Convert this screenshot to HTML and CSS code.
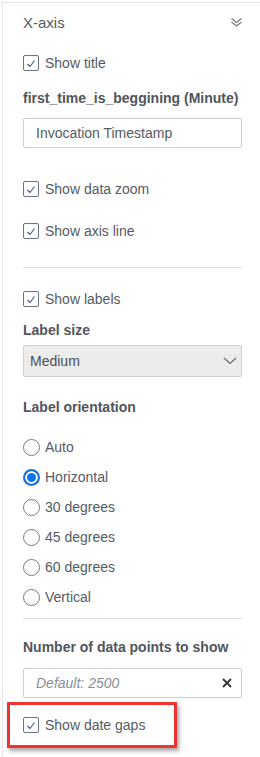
FILE: index.html
```html
<!DOCTYPE html>
<html>
<head>
<meta charset="utf-8">
<link rel="stylesheet" href="styles.css">
</head>
<body>
<div class="panel">
  <div class="header">
    <span class="title">X-axis</span>
    <svg class="dchev" width="13" height="11" viewBox="0 0 13 11"><path d="M1.5 1.5 L6.5 5.5 L11.5 1.5 M1.5 5 L6.5 9 L11.5 5" fill="none" stroke="#7a7a7a" stroke-width="1.3"/></svg>
  </div>

  <div class="row check r-title"><span class="cb"><svg width="10" height="9" viewBox="0 0 10 9"><path d="M1.5 5 L4 7.5 L8.5 1.5" fill="none" stroke="#3b4f8c" stroke-width="1.1"/></svg></span><span>Show title</span></div>
  <div class="label l-first">first_time_is_beggining (Minute)</div>
  <div class="input i-first"><span>Invocation Timestamp</span></div>

  <div class="row check r-zoom"><span class="cb"><svg width="10" height="9" viewBox="0 0 10 9"><path d="M1.5 5 L4 7.5 L8.5 1.5" fill="none" stroke="#3b4f8c" stroke-width="1.1"/></svg></span><span>Show data zoom</span></div>
  <div class="row check r-axis"><span class="cb"><svg width="10" height="9" viewBox="0 0 10 9"><path d="M1.5 5 L4 7.5 L8.5 1.5" fill="none" stroke="#3b4f8c" stroke-width="1.1"/></svg></span><span>Show axis line</span></div>

  <div class="divider d-first"></div>

  <div class="row check r-labels"><span class="cb"><svg width="10" height="9" viewBox="0 0 10 9"><path d="M1.5 5 L4 7.5 L8.5 1.5" fill="none" stroke="#3b4f8c" stroke-width="1.1"/></svg></span><span>Show labels</span></div>
  <div class="label l-size">Label size</div>
  <div class="select"><span>Medium</span><svg width="14" height="8" viewBox="0 0 14 8"><path d="M1 1 L7 6.5 L13 1" fill="none" stroke="#6a6a6a" stroke-width="1.2"/></svg></div>

  <div class="label l-orient">Label orientation</div>
  <div class="radios">
    <div class="row radio"><span class="rd"></span><span>Auto</span></div>
    <div class="row radio"><span class="rd on"></span><span>Horizontal</span></div>
    <div class="row radio"><span class="rd"></span><span>30 degrees</span></div>
    <div class="row radio"><span class="rd"></span><span>45 degrees</span></div>
    <div class="row radio"><span class="rd"></span><span>60 degrees</span></div>
    <div class="row radio"><span class="rd"></span><span>Vertical</span></div>
  </div>

  <div class="divider d-second"></div>

  <div class="label l-num">Number of data points to show</div>
  <div class="input i-num"><span class="ph">Default: 2500</span><svg class="clear" width="10" height="10" viewBox="0 0 10 10"><path d="M1 1 L9 9 M9 1 L1 9" fill="none" stroke="#333" stroke-width="1.8"/></svg></div>

  <div class="highlight">
    <div class="row check"><span class="cb"><svg width="10" height="9" viewBox="0 0 10 9"><path d="M1.5 5 L4 7.5 L8.5 1.5" fill="none" stroke="#3b4f8c" stroke-width="1.1"/></svg></span><span>Show date gaps</span></div>
  </div>
</div>
</body>
</html>
```

FILE: styles.css
```css
html, body {
  margin: 0;
  padding: 0;
  background: #fff;
}
body {
  font-family: "Liberation Sans", Arial, sans-serif;
  font-size: 14px;
  color: #545b64;
  width: 260px;
  height: 757px;
  overflow: hidden;
}
.panel {
  margin: 2px 0 0 2px;
  border-top: 1px solid #e4e4e4;
  border-left: 1px solid #e4e4e4;
  padding: 0 18px 0 20px;
  display: flex;
  flex-direction: column;
  height: 760px;
  box-sizing: border-box;
}
.header {
  height: 38px;
  display: flex;
  align-items: center;
  justify-content: space-between;
}
.title {
  font-size: 15px;
  color: #545b64;
}
.dchev {
  margin-right: -1px;
  margin-top: 1px;
}
.row {
  height: 30px;
  display: flex;
  align-items: center;
}
.check .cb {
  width: 16px;
  height: 16px;
  box-sizing: border-box;
  border: 1px solid #6f7080;
  border-radius: 2px;
  display: flex;
  align-items: center;
  justify-content: center;
  margin-right: 6px;
  flex: none;
}
.check .cb svg { margin-top: 1px; }
.label {
  height: 20px;
  line-height: 20px;
  font-weight: bold;
  color: #50555d;
}
.input {
  height: 30px;
  box-sizing: border-box;
  border: 1px solid #cfcfcf;
  border-radius: 2px;
  display: flex;
  align-items: center;
  justify-content: space-between;
  padding: 0 12px 0 12px;
}
.r-title { margin-top: 7px; }
.l-first { margin-top: 10px; }
.i-first { margin-top: 10px; }
.r-zoom { margin-top: 26px; }
.r-axis { margin-top: 12px; }
.divider {
  height: 1px;
  background: #dcdcdc;
  flex: none;
}
.d-first { margin-top: 21px; }
.r-labels { margin-top: 16px; }
.l-size { margin-top: 6px; }
.select {
  margin-top: 5px;
  height: 32px;
  box-sizing: border-box;
  border: 1px solid #cfcfcf;
  border-radius: 2px;
  background: #ececec;
  display: flex;
  align-items: center;
  justify-content: space-between;
  padding: 0 4px 0 6px;
  color: #4a4f56;
}
.l-orient { margin-top: 20px; }
.radios { margin-top: 15px; display: flex; flex-direction: column; }
.radio .rd {
  width: 17px;
  height: 17px;
  box-sizing: border-box;
  border: 1px solid #7a7a7a;
  border-radius: 50%;
  margin-right: 5px;
  flex: none;
  background: #fff;
}
.radio .rd.on {
  border: 2px solid #0a74e8;
  background: #0a74e8;
  box-shadow: inset 0 0 0 2px #fff;
}
.d-second { margin-top: 6px; }
.l-num { margin-top: 18px; }
.i-num { margin-top: 11px; padding-right: 9px; }
.ph {
  font-style: italic;
  color: #8a8f96;
}
.clear {
  flex: none;
}
.highlight {
  margin: 4px 0 0 -16px;
  width: 170px;
  height: 46px;
  box-sizing: border-box;
  border: 3px solid #ee3333;
  box-shadow: 2px 3px 4px rgba(0,0,0,0.35);
  padding: 0 0 0 13px;
  display: flex;
  align-items: center;
}
```
